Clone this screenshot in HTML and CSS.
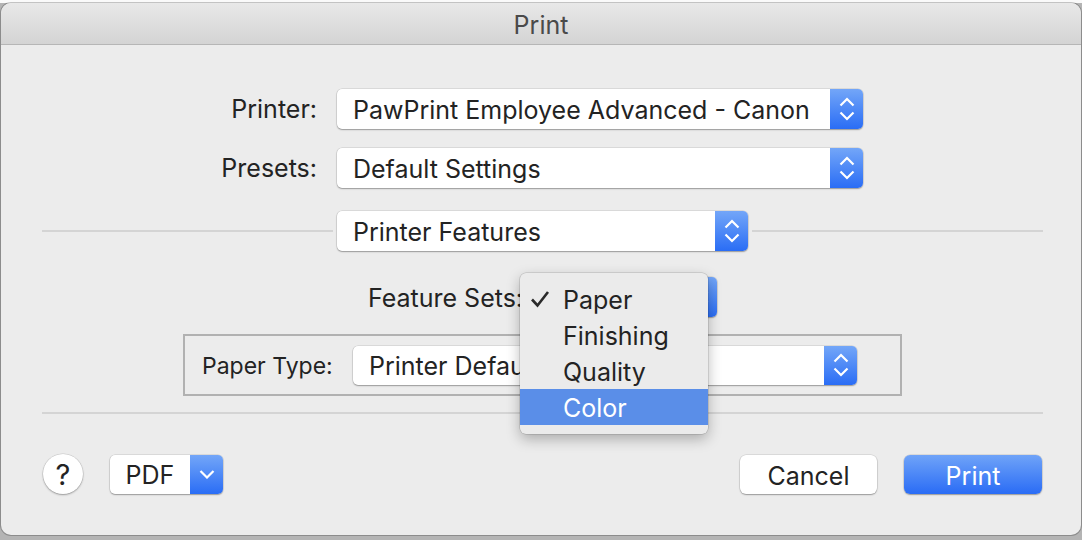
FILE: index.html
```html
<!DOCTYPE html>
<html lang="en">
<head>
    <meta charset="UTF-8">
    <title>Print</title>
    <link rel="stylesheet" href="styles.css">
</head>
<body>
    <div class="window">
        <div class="titlebar">Print</div>

        <div class="content">
            <div class="row">
                <span class="row-label">Printer:</span>
                <div class="popup popup-main">
                    <span class="popup-text">PawPrint Employee Advanced - Canon</span>
                    <span class="popup-arrows">
                        <svg width="16" height="24" viewBox="0 0 16 24"><path d="M1.5 8.5 L8 2 L14.5 8.5 M1.5 15.5 L8 22 L14.5 15.5"/></svg>
                    </span>
                </div>
            </div>

            <div class="row row-presets">
                <span class="row-label">Presets:</span>
                <div class="popup popup-main">
                    <span class="popup-text">Default Settings</span>
                    <span class="popup-arrows">
                        <svg width="16" height="24" viewBox="0 0 16 24"><path d="M1.5 8.5 L8 2 L14.5 8.5 M1.5 15.5 L8 22 L14.5 15.5"/></svg>
                    </span>
                </div>
            </div>

            <div class="pane-head">
                <div class="rule"></div>
                <div class="popup popup-pane">
                    <span class="popup-text">Printer Features</span>
                    <span class="popup-arrows">
                        <svg width="16" height="24" viewBox="0 0 16 24"><path d="M1.5 8.5 L8 2 L14.5 8.5 M1.5 15.5 L8 22 L14.5 15.5"/></svg>
                    </span>
                </div>
                <div class="rule"></div>
            </div>

            <div class="feature-row">
                <span class="feature-label">Feature Sets:</span>
                <div class="popup popup-feature">
                    <span class="popup-text covered">Paper</span>
                    <span class="popup-arrows">
                        <svg width="16" height="24" viewBox="0 0 16 24"><path d="M1.5 8.5 L8 2 L14.5 8.5 M1.5 15.5 L8 22 L14.5 15.5"/></svg>
                    </span>
                </div>
            </div>

            <div class="paper-box">
                <span class="paper-label">Paper Type:</span>
                <div class="popup popup-paper">
                    <span class="popup-text">Printer Default</span>
                    <span class="popup-arrows">
                        <svg width="16" height="24" viewBox="0 0 16 24"><path d="M1.5 8.5 L8 2 L14.5 8.5 M1.5 15.5 L8 22 L14.5 15.5"/></svg>
                    </span>
                </div>
            </div>

            <div class="rule divider"></div>

            <div class="footer">
                <div class="footer-left">
                    <button class="help">?</button>
                    <div class="popup popup-pdf">
                        <span class="pdf-text">PDF</span>
                        <span class="popup-arrows">
                            <svg width="16" height="10" viewBox="0 0 16 10"><path d="M1.5 2 L8 8.5 L14.5 2"/></svg>
                        </span>
                    </div>
                </div>
                <div class="footer-right">
                    <button class="btn">Cancel</button>
                    <button class="btn btn-default">Print</button>
                </div>
            </div>
        </div>

        <!-- open Feature Sets menu -->
        <div class="menu">
            <div class="menu-item">
                <svg class="check" width="20" height="18" viewBox="0 0 20 18"><path d="M2 9.5 L7.5 15.5 L18 2"/></svg>
                Paper
            </div>
            <div class="menu-item">Finishing</div>
            <div class="menu-item">Quality</div>
            <div class="menu-item selected">Color</div>
        </div>
    </div>
</body>
</html>
```

FILE: styles.css
```css
* {
    margin: 0;
    padding: 0;
    box-sizing: border-box;
}

body {
    width: 1082px;
    height: 540px;
    overflow: hidden;
    background: linear-gradient(#fafafa 0, #fafafa 3px, #b4b4b4 3px);
    font-family: Inter, "Noto Sans", sans-serif;
    color: #232323;
    font-size: 25px;
}

.window {
    position: relative;
    margin: 3px 0 0 1px;
    width: 1080px;
    height: 532px;
    background-color: #ececec;
    border-radius: 10px;
    overflow: hidden;
    box-shadow: 0 0 0 1px rgba(0, 0, 0, 0.22);
}

.titlebar {
    height: 42px;
    padding-top: 2px;
    line-height: 40px;
    text-align: center;
    font-size: 25px;
    color: #4a4a4a;
    background: linear-gradient(#e8e8e8, #d4d4d4);
    border-bottom: 1px solid #b6b6b6;
}

.content {
    padding: 44px 38px 0 41px;
}

.row {
    display: flex;
    align-items: center;
    gap: 20px;
}

.row-presets {
    margin-top: 19px;
}

.row-label {
    width: 275px;
    text-align: right;
}

/* popup buttons */
.popup {
    display: flex;
    align-items: center;
    height: 40px;
    background-color: #fff;
    border-radius: 5px;
    box-shadow: 0 0 0 0.5px rgba(0, 0, 0, 0.14), 0 1px 1.5px rgba(0, 0, 0, 0.3);
}

.popup-text {
    flex: 1;
    padding-left: 16px;
    padding-top: 2px;
    white-space: nowrap;
    overflow: hidden;
}

.popup-text.covered {
    visibility: hidden;
}

.popup-arrows {
    width: 33px;
    height: 100%;
    display: flex;
    align-items: center;
    justify-content: center;
    background: linear-gradient(#73a6f8, #2a6df5);
    border-radius: 0 5px 5px 0;
}

.popup-arrows svg path {
    fill: none;
    stroke: #fff;
    stroke-width: 2.2;
}

.popup-main {
    width: 526px;
}

.pane-head {
    display: flex;
    align-items: center;
    gap: 4px;
    margin-top: 23px;
}

.rule {
    flex: 1;
    height: 2px;
    background-color: #d4d4d4;
}

.popup-pane {
    width: 411px;
}

.feature-row {
    display: flex;
    justify-content: center;
    align-items: center;
    gap: 20px;
    margin-top: 26px;
}

.feature-label {
    padding-top: 2px;
}

.popup-feature {
    width: 174px;
}

.paper-box {
    display: flex;
    align-items: center;
    gap: 18px;
    width: 719px;
    height: 62px;
    margin: 17px auto 0;
    padding-left: 17px;
    border: 2px solid #b1b1b1;
}

.paper-label {
    width: 133px;
    white-space: nowrap;
    font-size: 23px;
    padding-top: 2px;
}

.popup-paper {
    width: 504px;
    height: 39px;
}

.divider {
    flex: none;
    margin-top: 16px;
}

.footer {
    display: flex;
    justify-content: space-between;
    align-items: center;
    margin-top: 40px;
}

.footer-left {
    display: flex;
    align-items: center;
    gap: 27px;
    padding-left: 1px;
}

.help {
    width: 40px;
    height: 40px;
    padding-top: 1px;
    border: none;
    border-radius: 50%;
    background-color: #fff;
    font-family: inherit;
    font-size: 29px;
    color: #232323;
    box-shadow: 0 0 0 0.5px rgba(0, 0, 0, 0.14), 0 1px 2px rgba(0, 0, 0, 0.3);
}

.popup-pdf {
    width: 113px;
    height: 39px;
}

.pdf-text {
    flex: 1;
    text-align: center;
    padding-top: 2px;
}

.footer-right {
    display: flex;
    gap: 27px;
    padding-right: 1px;
}

.btn {
    width: 137px;
    height: 39px;
    padding-top: 3px;
    border: none;
    border-radius: 6px;
    background-color: #fff;
    font-family: inherit;
    font-size: 25px;
    color: #232323;
    box-shadow: 0 0 0 0.5px rgba(0, 0, 0, 0.14), 0 1px 1.5px rgba(0, 0, 0, 0.3);
}

.btn-default {
    width: 138px;
    color: #fff;
    background: linear-gradient(#6fa3f8, #2a6cf5);
}

/* dropdown menu over the Feature Sets popup */
.menu {
    position: absolute;
    left: 519px;
    top: 270px;
    width: 188px;
    padding: 8px 0 9px;
    background-color: #ebebeb;
    border-radius: 6px;
    box-shadow: 0 0 0 0.5px rgba(0, 0, 0, 0.2), 0 5px 14px rgba(0, 0, 0, 0.28);
}

.menu-item {
    position: relative;
    height: 36px;
    line-height: 38px;
    padding-left: 43px;
}

.menu-item.selected {
    background-color: #5a8ee8;
    color: #fff;
}

.check {
    position: absolute;
    left: 10px;
    top: 9px;
}

.check path {
    fill: none;
    stroke: #2a2a2a;
    stroke-width: 2.6;
}
```
